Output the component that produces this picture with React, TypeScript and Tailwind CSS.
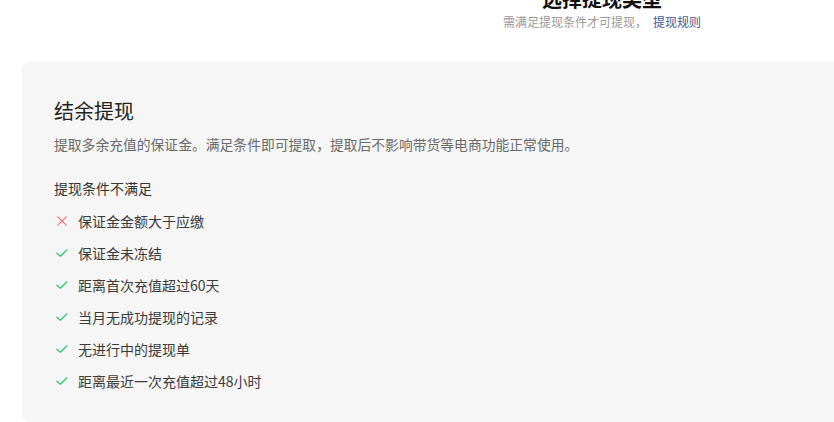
import React from "react";

const font = { fontFamily: '"Noto Sans CJK SC", "Noto Sans", sans-serif' };

function Check() {
  return (
    <svg width="12" height="12" viewBox="0 0 12 12" fill="none">
      <path d="M1 6.2 L4.3 9.3 L11 2.8" stroke="#2cc56f" strokeWidth="1.2" strokeLinecap="round" strokeLinejoin="round" />
    </svg>
  );
}

function Cross() {
  return (
    <svg width="12" height="12" viewBox="0 0 12 12" fill="none">
      <path d="M1.8 1.8 L10.2 10.2 M10.2 1.8 L1.8 10.2" stroke="#f26d73" strokeWidth="1.2" strokeLinecap="round" />
    </svg>
  );
}

const items: { ok: boolean; text: string }[] = [
  { ok: false, text: "保证金金额大于应缴" },
  { ok: true, text: "保证金未冻结" },
  { ok: true, text: "距离首次充值超过60天" },
  { ok: true, text: "当月无成功提现的记录" },
  { ok: true, text: "无进行中的提现单" },
  { ok: true, text: "距离最近一次充值超过48小时" },
];

export default function App() {
  return (
    <div className="w-[834px] h-[422px] overflow-hidden bg-white" style={font}>
      <div className="ml-[22px] w-[1160px]">
        <div className="text-center -mt-[15px]">
          <div className="text-[20px] leading-[28px] font-bold text-[#111]">选择提现类型</div>
          <div className="mt-[-1px] text-[12px] leading-[20px] text-[#999]">
            需满足提现条件才可提现，
            <span className="ml-[6px] text-[#3a5a98]">提现规则</span>
          </div>
        </div>
        <div className="mt-[30px] rounded-[8px] bg-[#f6f6f6] pl-[32px] pt-[35px] pb-[30px]">
          <div className="text-[20px] leading-[28px] text-[#222]">结余提现</div>
          <div className="mt-[8px] text-[13.8px] leading-[22px] text-[#6a6a6a]">
            提取多余充值的保证金。满足条件即可提取，提取后不影响带货等电商功能正常使用。
          </div>
          <div className="mt-[22px] text-[14px] leading-[22px] text-[#333]">提现条件不满足</div>
          <div className="mt-[11px] flex flex-col gap-[10px]">
            {items.map((it) => (
              <div key={it.text} className="flex items-center h-[22px]">
                <div className="w-[24px] pl-[2px] flex items-center">{it.ok ? <Check /> : <Cross />}</div>
                <span className="text-[14px] leading-[22px] text-[#3a3a3a]">{it.text}</span>
              </div>
            ))}
          </div>
        </div>
      </div>
    </div>
  );
}
